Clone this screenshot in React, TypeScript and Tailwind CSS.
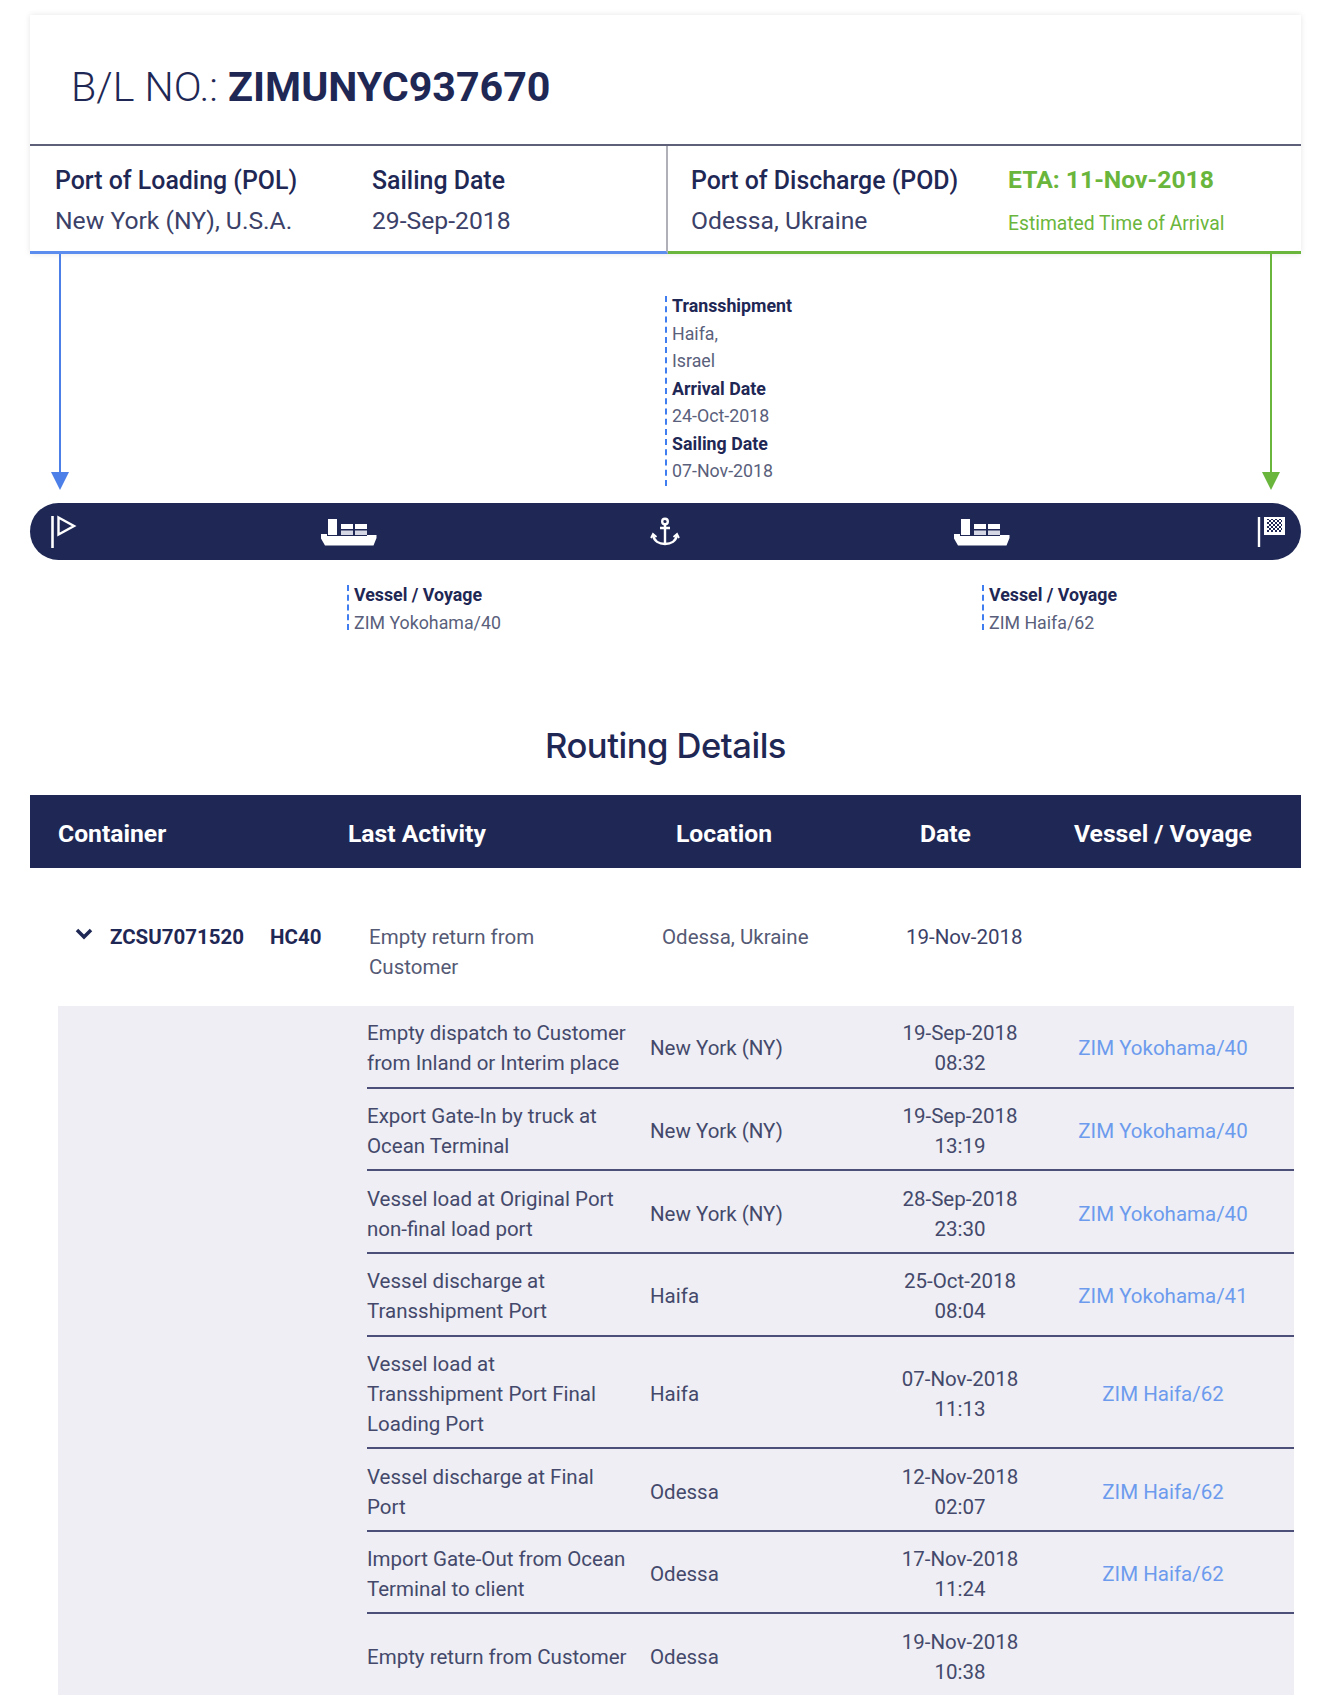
import React from "react";

const rows = [
  { a: ["Empty dispatch to Customer", "from Inland or Interim place"], l: "New York (NY)", d: "19-Sep-2018", t: "08:32", v: "ZIM Yokohama/40" },
  { a: ["Export Gate-In by truck at", "Ocean Terminal"], l: "New York (NY)", d: "19-Sep-2018", t: "13:19", v: "ZIM Yokohama/40" },
  { a: ["Vessel load at Original Port", "non-final load port"], l: "New York (NY)", d: "28-Sep-2018", t: "23:30", v: "ZIM Yokohama/40" },
  { a: ["Vessel discharge at", "Transshipment Port"], l: "Haifa", d: "25-Oct-2018", t: "08:04", v: "ZIM Yokohama/41" },
  { a: ["Vessel load at", "Transshipment Port Final", "Loading Port"], l: "Haifa", d: "07-Nov-2018", t: "11:13", v: "ZIM Haifa/62" },
  { a: ["Vessel discharge at Final", "Port"], l: "Odessa", d: "12-Nov-2018", t: "02:07", v: "ZIM Haifa/62" },
  { a: ["Import Gate-Out from Ocean", "Terminal to client"], l: "Odessa", d: "17-Nov-2018", t: "11:24", v: "ZIM Haifa/62" },
  { a: ["Empty return from Customer"], l: "Odessa", d: "19-Nov-2018", t: "10:38", v: "" },
];

function Ship() {
  return (
    <svg width="57" height="28" viewBox="0 0 57 28" fill="white">
      <path d="M8 1h9v16H8z" />
      <path d="M21 6h12v5H21zM35 6h12v5H35z" />
      <path d="M21 12.500h12V17H21zM35 12.500h12V17H35z" fill="#d5d7e4" />
      <path d="M1 16h6v2h40v-1h9.500v3l-3 7.500H5L1 20.500z" />
    </svg>
  );
}

function StartFlag() {
  return (
    <svg width="28" height="34" viewBox="0 0 28 34" fill="none" stroke="white">
      <path d="M2.500 1v32" strokeWidth="2.600" />
      <path d="M8.500 2.500 24 11 8.500 19.500z" strokeWidth="2.400" />
    </svg>
  );
}

function EndFlag() {
  return (
    <svg width="30" height="32" viewBox="0 0 30 32">
      <defs>
        <pattern id="chk" width="4" height="4" patternUnits="userSpaceOnUse">
          <rect width="4" height="4" fill="white" />
          <rect width="2" height="2" fill="#1f2855" />
          <rect x="2" y="2" width="2" height="2" fill="#1f2855" />
        </pattern>
      </defs>
      <path d="M2 1v30" stroke="white" strokeWidth="2.400" />
      <path d="M7 1h21v18H7z" fill="white" />
      <path d="M10 3h15v13H10z" fill="url(#chk)" />
    </svg>
  );
}

function Anchor() {
  return (
    <svg width="30" height="30" viewBox="0 0 30 30" fill="none" stroke="white" strokeWidth="2.400">
      <circle cx="15" cy="4.500" r="2.800" />
      <path d="M15 7.500V27M10 11h10" />
      <path d="M3 18c1 6 6 9 12 9s11-3 12-9" />
      <path d="M1 21l2-4 3.500 3M29 21l-2-4-3.500 3" strokeWidth="1.800" />
    </svg>
  );
}

function Arrow({ color, border }: { color: string; border: string }) {
  return (
    <div className="flex flex-col items-center w-[20px] shrink-0">
      <div className={`w-[2px] h-[218px] ${color}`} />
      <div className={`w-0 h-0 border-x-[9px] border-x-transparent border-t-[18px] ${border}`} />
    </div>
  );
}

function Note({ lines, box }: { lines: [string, boolean][]; box: string }) {
  return (
    <div className={`flow-root border-l-2 border-dashed border-[#3f7df0] pl-[5px] text-[17.800px] leading-[27.500px] whitespace-nowrap ${box}`}>
      <div className="-mt-[4px]">
        {lines.map(([t, b], i) => (
          <div key={i} className={b ? "font-bold text-[#1f2855]" : "text-[#5a5f7c]"}>{t}</div>
        ))}
      </div>
    </div>
  );
}

export default function App() {
  return (
    <div className="w-[1320px] h-[1708px] bg-white overflow-hidden pt-[15px] px-[30px] text-[#1f2855]" style={{ fontFamily: "Roboto, sans-serif" }}>
      <div className="w-[1271px] shadow-[0_0_6px_rgba(0,0,0,0.1)]">
        <div className="h-[131px] pl-[41px] pt-[44px] text-[41.200px] leading-[56px] font-light border-b-2 border-[#5e5f78]">
          B/L NO.: <span className="font-bold">ZIMUNYC937670</span>
        </div>
        <div className="flex h-[108px]">
          <div className="w-[638px] flex border-b-[3px] border-[#5b8def] border-r-2 border-r-[#b0b0b8] pt-[20px] pl-[25px]">
            <div className="w-[317px]">
              <div className="text-[24.900px] leading-[30px] font-medium">Port of Loading (POL)</div>
              <div className="text-[24.700px] leading-[30px] mt-[10px] text-[#3b4168]">New York (NY), U.S.A.</div>
            </div>
            <div>
              <div className="text-[24.900px] leading-[30px] font-medium">Sailing Date</div>
              <div className="text-[24.700px] leading-[30px] mt-[10px] text-[#3b4168]">29-Sep-2018</div>
            </div>
          </div>
          <div className="flex-1 flex border-b-[3px] border-[#6ab63c] pt-[20px] pl-[23px]">
            <div className="w-[317px]">
              <div className="text-[24.900px] leading-[30px] font-medium">Port of Discharge (POD)</div>
              <div className="text-[24.700px] leading-[30px] mt-[10px] text-[#3b4168]">Odessa, Ukraine</div>
            </div>
            <div className="text-[#6ab63c]">
              <div className="text-[24.700px] leading-[30px] font-bold -mt-[1px]">ETA: 11-Nov-2018</div>
              <div className="text-[19.300px] leading-[30px] mt-[14px]">Estimated Time of Arrival</div>
            </div>
          </div>
        </div>
      </div>

      <div className="flex items-end w-[1271px] h-[236px] px-[20px]">
        <Arrow color="bg-[#4d7fe8]" border="border-t-[#4d7fe8]" />
        <div className="flex-1 pl-[595px] mb-[4px]">
          <Note box="h-[190px]" lines={[["Transshipment", true], ["Haifa,", false], ["Israel", false], ["Arrival Date", true], ["24-Oct-2018", false], ["Sailing Date", true], ["07-Nov-2018", false]]} />
        </div>
        <Arrow color="bg-[#6ab63c]" border="border-t-[#6ab63c]" />
      </div>

      <div className="mt-[13px] w-[1271px] h-[57px] rounded-full bg-[#1f2855] flex items-center pl-[20px] pr-[14px]">
        <div className="w-[28px] mt-[1px]"><StartFlag /></div>
        <div className="w-[299px] flex justify-end"><Ship /></div>
        <div className="w-[303px] flex justify-end"><Anchor /></div>
        <div className="w-[330px] flex justify-end"><Ship /></div>
        <div className="flex-1 flex justify-end mt-[1px]"><EndFlag /></div>
      </div>

      <div className="flex w-[1271px] mt-[25px] pl-[317px]">
        <div className="w-[635px]"><Note box="h-[45px]" lines={[["Vessel / Voyage", true], ["ZIM Yokohama/40", false]]} /></div>
        <div><Note box="h-[45px]" lines={[["Vessel / Voyage", true], ["ZIM Haifa/62", false]]} /></div>
      </div>

      <div className="w-[1271px] mt-[93px] text-center text-[34.600px] leading-[44px] font-medium tracking-[-0.5px]" style={{ fontFamily: "Inter, sans-serif" }}>Routing Details</div>

      <div className="mt-[28px] w-[1271px] h-[73px] bg-[#1f2855] text-white text-[24.700px] font-bold grid grid-cols-[290px_328px_244px_154px_1fr] items-center pl-[28px] pt-[4px] whitespace-nowrap">
        <div>Container</div>
        <div>Last Activity</div>
        <div>Location</div>
        <div>Date</div>
        <div>Vessel / Voyage</div>
      </div>

      <div className="h-[138px] grid grid-cols-[35px_160px_99px_293px_244px_1fr] pl-[45px] pt-[54px] text-[20.500px] leading-[30px]">
        <svg width="18" height="30" viewBox="0 0 18 30" fill="none" stroke="#1f2855" strokeWidth="3.500">
          <path d="M2 8l7 7 7-7" />
        </svg>
        <div className="font-bold">ZCSU7071520</div>
        <div className="font-bold">HC40</div>
        <div className="text-[#555a75] w-[200px]">Empty return from Customer</div>
        <div className="text-[#555a75]">Odessa, Ukraine</div>
        <div className="text-[#3b4168]">19-Nov-2018</div>
      </div>

      <div className="ml-[28px] w-[1236px] h-[689px] bg-[#eeeef4] pl-[309px] text-[20.500px] leading-[30px] text-[#44496b]">
        {rows.map((r, i) => (
          <div key={i} className={`grid grid-cols-[283px_230px_160px_246px] items-center pt-[12.400px] pb-[8.250px] ${i < rows.length - 1 ? "border-b-2 border-[#4c5078]" : ""}`}>
            <div className="whitespace-nowrap">
              {r.a.map((t) => <div key={t}>{t}</div>)}
            </div>
            <div>{r.l}</div>
            <div className="text-center">
              <div>{r.d}</div>
              <div>{r.t}</div>
            </div>
            <div className="text-center text-[#6c9bee]">{r.v}</div>
          </div>
        ))}
      </div>
    </div>
  );
}
